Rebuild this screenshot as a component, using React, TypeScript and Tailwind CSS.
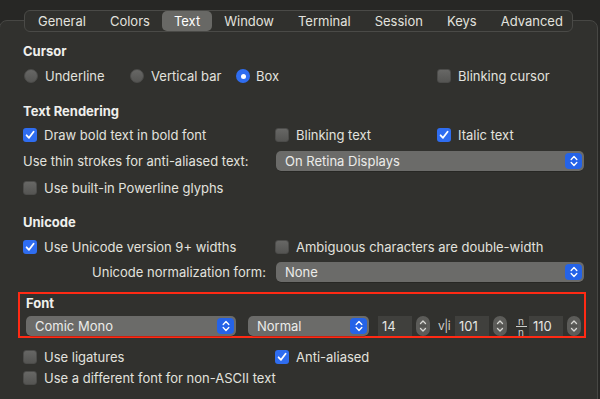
import React from "react";

const TABS = ["General", "Colors", "Text", "Window", "Terminal", "Session", "Keys", "Advanced"];

function Check({ on = false }: { on?: boolean }) {
  if (on) {
    return (
      <span className="w-[14px] h-[14px] rounded-[3px] bg-[#2f6df0] flex items-center justify-center shrink-0">
        <svg width="10" height="10" viewBox="0 0 10 10">
          <path d="M1.6 5.3 L4 7.8 L8.6 1.8" fill="none" stroke="#fff" strokeWidth="1.8" strokeLinecap="round" strokeLinejoin="round" />
        </svg>
      </span>
    );
  }
  return (
    <span className="w-[14px] h-[14px] rounded-[3px] bg-gradient-to-b from-[#676765] to-[#555553] border border-[#4c4c4a] shrink-0" />
  );
}

function Radio({ on = false }: { on?: boolean }) {
  if (on) {
    return (
      <span className="w-[14px] h-[14px] rounded-full bg-[#2f6df0] flex items-center justify-center shrink-0">
        <span className="w-[5px] h-[5px] rounded-full bg-white" />
      </span>
    );
  }
  return <span className="w-[14px] h-[14px] rounded-full bg-gradient-to-b from-[#676765] to-[#555553] border border-[#4c4c4a] shrink-0" />;
}

function Chevrons({ color = "#fff" }: { color?: string }) {
  return (
    <svg width="8" height="12" viewBox="0 0 8 12">
      <path d="M1.2 4.4 L4 1.6 L6.8 4.4 M1.2 7.6 L4 10.4 L6.8 7.6" fill="none" stroke={color} strokeWidth="1.4" strokeLinecap="round" strokeLinejoin="round" />
    </svg>
  );
}

function Popup({ label, w }: { label: string; w: string }) {
  return (
    <div className={`${w} h-[20px] rounded-[5px] bg-[#6b6b69] flex items-center justify-between pl-[9px] pr-[2px] text-[#ecece9] shadow-[0_0.5px_0_rgba(0,0,0,0.4)]`}>
      <span>{label}</span>
      <span className="w-[17px] h-[16px] rounded-[4px] bg-[#2563e8] flex items-center justify-center">
        <Chevrons />
      </span>
    </div>
  );
}

function NumField({ value }: { value: string }) {
  return (
    <div className="flex items-center">
      <div className="w-[34px] h-[20px] bg-[#40403d] flex items-center pl-[4px] text-[#e6e6e2]">{value}</div>
      <div className="ml-[4px] w-[14px] h-[20px] rounded-full bg-[#5c5c59] flex flex-col items-center justify-center">
        <svg width="8" height="16" viewBox="0 0 8 16">
          <path d="M1.5 5.5 L4 3 L6.5 5.5 M1.5 10.5 L4 13 L6.5 10.5" fill="none" stroke="#d8d8d4" strokeWidth="1.3" strokeLinecap="round" strokeLinejoin="round" />
          <path d="M0 8 L8 8" stroke="#4a4a47" strokeWidth="0.8" />
        </svg>
      </div>
    </div>
  );
}

function Row({ children, className = "" }: { children: React.ReactNode; className?: string }) {
  return <div className={`flex items-center h-[18px] ${className}`}>{children}</div>;
}

function Item({ children, w, on, className = "" }: { children: React.ReactNode; w: string; on?: boolean; className?: string }) {
  return (
    <div className={`flex items-center gap-[7px] ${w} ${className}`}>
      <Check on={on} />
      <span>{children}</span>
    </div>
  );
}

export default function App() {
  return (
    <div
      className="w-[600px] h-[399px] bg-[#272725] overflow-hidden text-[13px] text-[#e2e2de] leading-none"
      style={{ fontFamily: "Inter, 'Noto Sans', sans-serif" }}
    >
      {/* tab bar, overlapping panel top edge */}
      <div className="relative z-10 mt-[10px] ml-[24px] w-[549px] h-[22px] rounded-[6px] border border-[#4a4a47] bg-[#30302d] flex items-center px-[1px]">
        {TABS.map((t, i) => {
          const sel = t === "Text";
          const nextSel = TABS[i + 1] === "Text";
          return (
            <React.Fragment key={t}>
              <div
                className={`h-[20px] flex items-center px-[12px] rounded-[5px] ${sel ? "bg-[#686865] text-white" : "text-[#e2e2de]"}`}
              >
                {t}
              </div>
              {i < TABS.length - 1 && !sel && !nextSel && <span className="w-px h-[12px] bg-[#4a4a47]" />}
            </React.Fragment>
          );
        })}
      </div>

      {/* panel */}
      <div className="-mt-[12px] ml-[-1px] w-[599px] h-[400px] rounded-[8px] border border-[#474744] bg-[#31312e]">
        <div className="pt-[21px]">
          <Row className="ml-[23px] font-bold text-[#efefec]">Cursor</Row>
          <Row className="mt-[7px]">
            <div className="flex items-center gap-[7px] ml-[24px] w-[106px]">
              <Radio />
              <span>Underline</span>
            </div>
            <div className="flex items-center gap-[7px] w-[106px]">
              <Radio />
              <span>Vertical bar</span>
            </div>
            <div className="flex items-center gap-[6px] w-[201px]">
              <Radio on />
              <span>Box</span>
            </div>
            <Item w="w-[150px]">Blinking cursor</Item>
          </Row>

          <Row className="mt-[17px] ml-[23px] font-bold text-[#efefec]">Text Rendering</Row>
          <Row className="mt-[6px]">
            <Item on w="w-[252px]" className="ml-[23px]">Draw bold text in bold font</Item>
            <Item w="w-[162px]">Blinking text</Item>
            <Item on w="w-[140px]">Italic text</Item>
          </Row>
          <div className="mt-[7px] h-[20px] flex items-center">
            <span className="ml-[23px] w-[253px]">Use thin strokes for anti-aliased text:</span>
            <Popup label="On Retina Displays" w="w-[308px]" />
          </div>
          <Row className="mt-[8px]">
            <Item w="w-[300px]" className="ml-[23px]">Use built-in Powerline glyphs</Item>
          </Row>

          <Row className="mt-[16px] ml-[23px] font-bold text-[#efefec]">Unicode</Row>
          <Row className="mt-[7px]">
            <Item on w="w-[252px]" className="ml-[23px]">Use Unicode version 9+ widths</Item>
            <Item w="w-[300px]">Ambiguous characters are double-width</Item>
          </Row>
          <div className="mt-[6px] h-[20px] flex items-center">
            <span className="w-[266px] text-right">Unicode normalization form:</span>
            <span className="w-[10px]" />
            <Popup label="None" w="w-[308px]" />
          </div>

          <div className="mt-[10px] ml-[18px] w-[568px] h-[46px] border-2 border-[#ff2a14] pl-[6px]">
            <div className="h-[16px] mt-[1px] flex items-center font-bold text-[#efefec]">Font</div>
            <div className="mt-[5px] h-[20px] flex items-center">
              <Popup label="Comic Mono" w="w-[210px]" />
              <span className="w-[12px]" />
              <Popup label="Normal" w="w-[121px]" />
              <span className="w-[9px]" />
              <NumField value="14" />
              <span className="ml-[8px] w-[17px] text-[12px] text-[#cfcfcb] tracking-[-0.5px]">v|i</span>
              <NumField value="101" />
              <span className="ml-[6px] w-[16px] flex flex-col items-center text-[10px] text-[#cfcfcb] leading-[8px]">
                <span>n</span>
                <span className="w-[11px] h-px bg-[#cfcfcb] my-[1px]" />
                <span>n</span>
              </span>
              <NumField value="110" />
            </div>
          </div>

          <Row className="mt-[10px]">
            <Item w="w-[252px]" className="ml-[23px]">Use ligatures</Item>
            <Item on w="w-[200px]">Anti-aliased</Item>
          </Row>
          <Row className="mt-[3px]">
            <Item w="w-[300px]" className="ml-[23px]">Use a different font for non-ASCII text</Item>
          </Row>
        </div>
      </div>
    </div>
  );
}
